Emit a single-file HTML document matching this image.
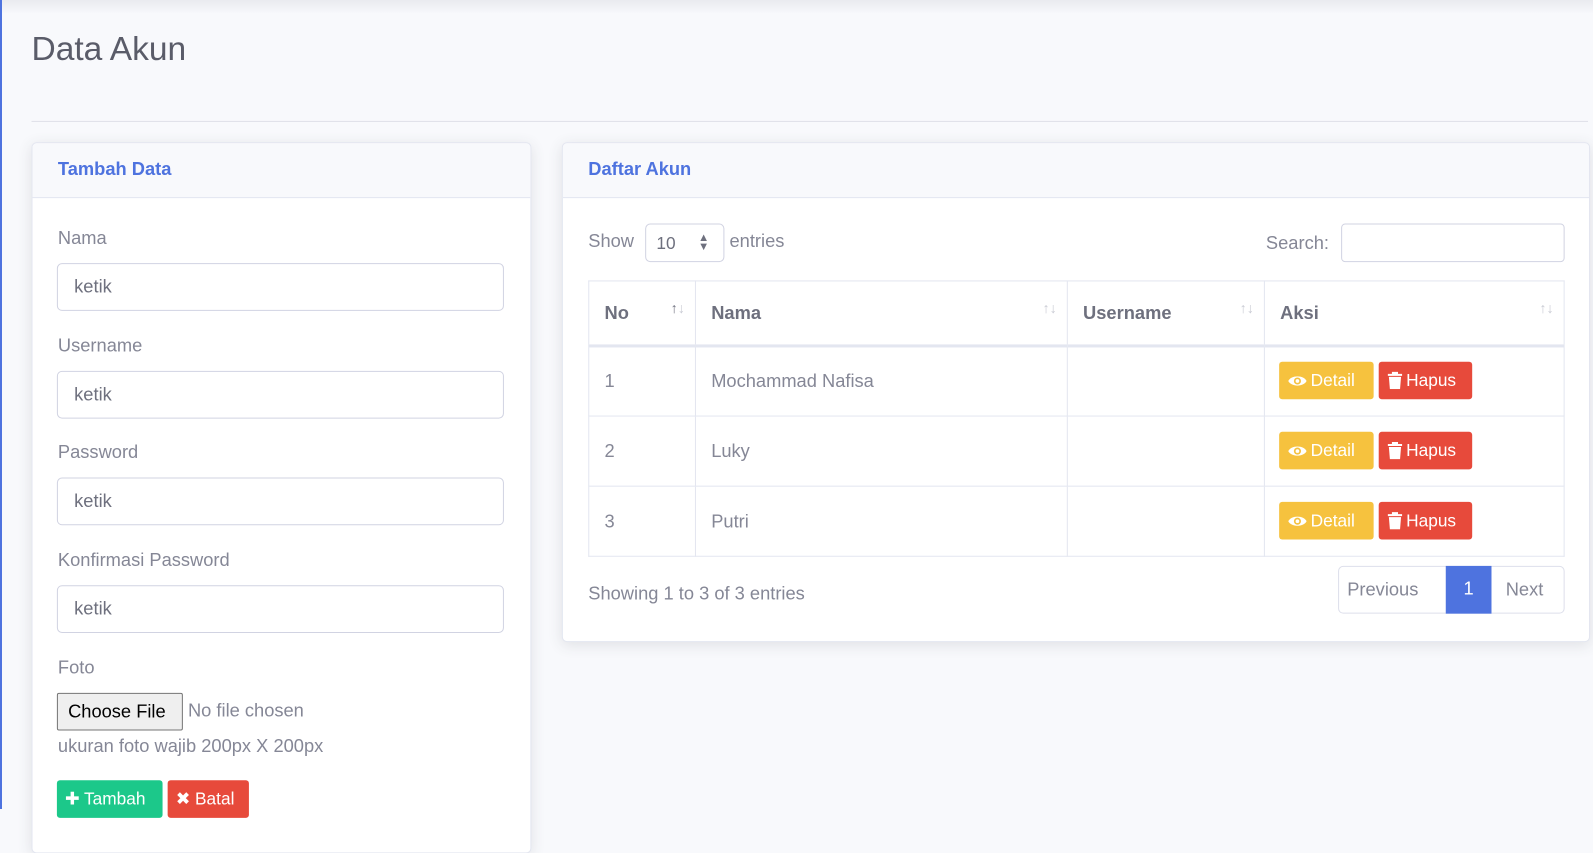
<!DOCTYPE html>
<html><head><meta charset="utf-8"><style>
*{box-sizing:border-box;margin:0;padding:0}
html,body{width:1593px;height:809px;overflow:hidden;background:#f8f9fc}
body{font-family:"Liberation Sans",sans-serif;color:#858796;font-size:17px}
#w{position:absolute;left:0;top:0;width:1568px;height:800px;transform:scale(1.016);transform-origin:0 0}
.abs{position:absolute}
.lb{position:absolute;left:0;top:0;width:2px;height:809px;background:#4e73df}
.topsh{position:absolute;left:0;top:0;width:1593px;height:14px;background:linear-gradient(#e9eaef,#f8f9fc)}
h1{position:absolute;left:31px;top:29px;font-weight:400;font-size:33px;color:#5a5c69}
.hr{position:absolute;left:31px;top:119px;width:1532px;height:1px;background:#dfe1e8}
.card{position:absolute;background:#fff;border:1px solid #e3e6f0;border-radius:5px;box-shadow:0 3px 14px rgba(58,59,69,.12);overflow:hidden}
.ch{height:54px;background:#f8f9fc;border-bottom:1px solid #e3e6f0;color:#4e73df;font-weight:700;font-size:18px;padding:15px 25px}
.lab{position:absolute;left:25px;font-size:18px}
.inp{position:absolute;left:24px;width:440px;height:47px;border:1px solid #d1d3e2;border-radius:5px;padding:12px 16px;font-size:18px;color:#6e707e}
.btn{position:absolute;color:#fff;border-radius:3px;font-size:17px;padding:0 8px;line-height:37px;height:37px;white-space:nowrap}
.btn svg{vertical-align:-3px;margin-right:3px}
table{position:absolute;left:25px;top:135px;width:961px;border-collapse:collapse;font-size:18px}
td,th{border:1px solid #e3e6f0;padding:0 15px;text-align:left}
th{height:64px;font-weight:700;color:#6e707e;border-bottom:3px solid #e3e6f0;position:relative}
td{height:69px}
.s{position:absolute;right:10px;top:18px;font-size:14px;color:#c8cad3;font-weight:400}
</style></head><body>
<div class="topsh"></div><div class="lb"></div>
<div id="w">
<h1>Data Akun</h1><div class="hr"></div>
<div class="card" style="left:31px;top:140px;width:492px;height:700px">
<div class="ch">Tambah Data</div>
<div class="lab" style="top:83px">Nama</div><div class="inp" style="top:118px">ketik</div>
<div class="lab" style="top:189px">Username</div><div class="inp" style="top:224px">ketik</div>
<div class="lab" style="top:294px">Password</div><div class="inp" style="top:329px">ketik</div>
<div class="lab" style="top:400px">Konfirmasi Password</div><div class="inp" style="top:435px">ketik</div>
<div class="lab" style="top:506px">Foto</div>
<div class="abs" style="left:24px;top:541px;width:124px;height:37px;border:1px solid #767676;background:#efefef;border-radius:2px;color:#000;font-size:18px;padding:7px 10px">Choose File</div>
<div class="abs" style="left:153px;top:548px;font-size:18px;color:#858796">No file chosen</div>
<div class="lab" style="top:583px">ukuran foto wajib 200px X 200px</div>
<div class="btn" style="left:24px;top:627px;background:#1cc88a;width:104px">✚ Tambah</div>
<div class="btn" style="left:133px;top:627px;background:#e74a3b;width:80px">✖ Batal</div>
</div>
<div class="card" style="left:553px;top:140px;width:1012px;height:492px">
<div class="ch">Daftar Akun</div>
<div class="abs" style="left:25px;top:86px;font-size:18px">Show</div>
<div class="abs" style="left:81px;top:79px;width:78px;height:38px;border:1px solid #d1d3e2;border-radius:5px;padding:9px 10px;font-size:17px;color:#6e707e">10 <span style="position:absolute;right:14px;top:9px;font-size:11px;line-height:9px">▲<br>▼</span></div>
<div class="abs" style="left:164px;top:86px;font-size:18px">entries</div>
<div class="abs" style="left:692px;top:88px;font-size:18px">Search:</div>
<div class="abs" style="left:766px;top:79px;width:220px;height:38px;border:1px solid #d1d3e2;border-radius:4px"></div>
<table>
<tr><th style="width:105px">No<span class="s" style="color:#6e707e">↑<span style="color:#c8cad3">↓</span></span></th><th style="width:366px">Nama<span class="s">↑↓</span></th><th style="width:194px">Username<span class="s">↑↓</span></th><th>Aksi<span class="s">↑↓</span></th></tr>
<tr><td>1</td><td>Mochammad Nafisa</td><td></td><td></td></tr>
<tr><td>2</td><td>Luky</td><td></td><td></td></tr>
<tr><td>3</td><td>Putri</td><td></td><td></td></tr>
</table>
<div class="btn" style="left:705px;top:215px;background:#f6c23e;width:93px"><svg width="20" height="16" viewBox="0 0 20 16"><path d="M1 8C4 2 16 2 19 8C16 14 4 14 1 8Z" fill="#fff"/><circle cx="10" cy="8" r="3.5" fill="#f6c23e"/><circle cx="10" cy="8" r="1.8" fill="#fff"/></svg>Detail</div><div class="btn" style="left:803px;top:215px;background:#e74a3b;width:92px"><svg width="16" height="18" viewBox="0 0 16 18"><path d="M1 3h14v2H1zM5 1h6v2H5zM2 6h12l-1 12H3z" fill="#fff"/></svg>Hapus</div>
<div class="btn" style="left:705px;top:284px;background:#f6c23e;width:93px"><svg width="20" height="16" viewBox="0 0 20 16"><path d="M1 8C4 2 16 2 19 8C16 14 4 14 1 8Z" fill="#fff"/><circle cx="10" cy="8" r="3.5" fill="#f6c23e"/><circle cx="10" cy="8" r="1.8" fill="#fff"/></svg>Detail</div><div class="btn" style="left:803px;top:284px;background:#e74a3b;width:92px"><svg width="16" height="18" viewBox="0 0 16 18"><path d="M1 3h14v2H1zM5 1h6v2H5zM2 6h12l-1 12H3z" fill="#fff"/></svg>Hapus</div>
<div class="btn" style="left:705px;top:353px;background:#f6c23e;width:93px"><svg width="20" height="16" viewBox="0 0 20 16"><path d="M1 8C4 2 16 2 19 8C16 14 4 14 1 8Z" fill="#fff"/><circle cx="10" cy="8" r="3.5" fill="#f6c23e"/><circle cx="10" cy="8" r="1.8" fill="#fff"/></svg>Detail</div><div class="btn" style="left:803px;top:353px;background:#e74a3b;width:92px"><svg width="16" height="18" viewBox="0 0 16 18"><path d="M1 3h14v2H1zM5 1h6v2H5zM2 6h12l-1 12H3z" fill="#fff"/></svg>Hapus</div>
<div class="abs" style="left:25px;top:433px;font-size:18px">Showing 1 to 3 of 3 entries</div>
<div class="abs" style="left:763px;top:416px;width:223px;height:47px;border:1px solid #dddfeb;border-radius:5px;font-size:18px">
<span class="abs" style="left:8px;top:12px">Previous</span>
<span class="abs" style="left:105px;top:-1px;width:45px;height:47px;background:#4e73df;color:#fff;text-align:center;padding-top:12px">1</span>
<span class="abs" style="left:164px;top:12px">Next</span></div>
</div>
</div>
</body></html>
